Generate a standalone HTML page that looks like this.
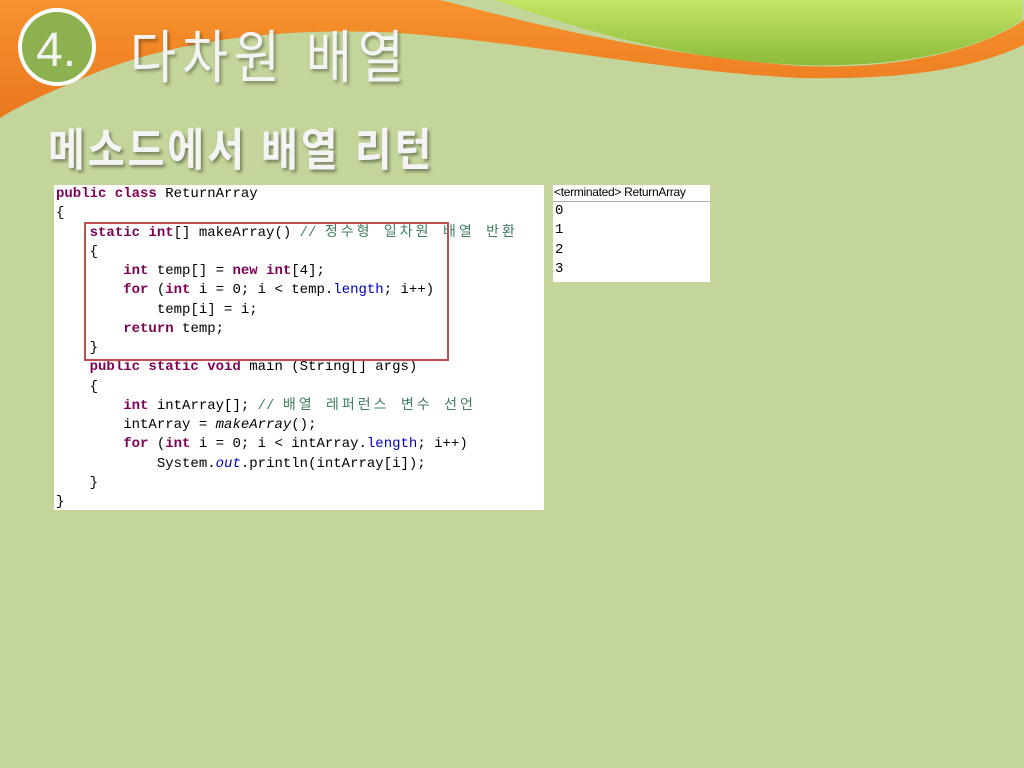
<!DOCTYPE html>
<html><head><meta charset="utf-8"><style>
body{margin:0;width:1024px;height:768px;background:#c3d59a;position:relative;overflow:hidden;font-family:"Liberation Sans","Noto Sans CJK KR",sans-serif}
.abs{position:absolute}
.code{left:54px;top:185px;width:490px;height:325px;background:#fff}
pre{margin:0;font-family:"Liberation Mono","Noto Sans CJK KR",monospace;font-size:14px;line-height:19.25px;color:#000;position:absolute;left:2px;top:0px}
.k{color:#7f0055;font-weight:bold}.c{color:#3f7f5f}.f{color:#0000c0}.i{font-style:italic}
.ko{letter-spacing:3px}
.box{left:84px;top:222px;width:361px;height:135px;border:2px solid #c0504d}
.con{left:553px;top:185px;width:157px;height:97px;background:#fff}
.con .h{font-size:12px;height:16px;line-height:15px;border-bottom:1px solid #aaa;padding-left:1px;letter-spacing:-0.3px}
.con pre{position:static;font-size:14px;line-height:19.3px;padding-left:2px}
.t1{left:130px;top:12px;font-size:50px;color:#f4f4f4;text-shadow:2px 2px 3px rgba(0,0,0,.35);letter-spacing:6px;transform:scaleY(1.15);transform-origin:0 0}
.t2{left:48px;top:114px;font-size:40px;font-weight:bold;color:#f4f4f4;text-shadow:2px 2px 3px rgba(0,0,0,.4);letter-spacing:3px;transform:scaleY(1.12);transform-origin:0 0}
</style></head><body>
<svg class="abs" style="left:0;top:0" width="1024" height="130">
<defs><linearGradient id="o" x1="0" y1="0" x2="0" y2="1"><stop offset="0" stop-color="#f7922e"/><stop offset="1" stop-color="#e9781e"/></linearGradient>
<linearGradient id="g" x1="0" y1="0" x2="0" y2="1"><stop offset="0" stop-color="#c4e466"/><stop offset="1" stop-color="#8cbb3a"/></linearGradient></defs>
<path d="M0 0 H440 C520 20 650 55 800 66 C900 70 980 50 1024 20 V45 C970 70 900 80 800 78 C650 70 550 45 400 33 C250 25 150 50 90 75 C50 92 20 105 0 118 Z" fill="url(#o)"/>
<path d="M495 0 C580 30 680 60 800 65 C900 68 980 50 1022 20 V0 Z" fill="url(#g)"/>
<circle cx="57" cy="47" r="37" fill="#8db150" stroke="#fff" stroke-width="4"/>
<text x="36" y="66" font-family="Liberation Sans" font-size="48" fill="#f4f4f4">4.</text>
</svg>
<div class="abs t1">다차원 배열</div>
<div class="abs t2">메소드에서 배열 리턴</div>
<div class="abs code"><pre><span class="k">public class</span> ReturnArray
{
    <span class="k">static int</span>[] makeArray() <span class="c">// <span class="ko">정수형 일차원 배열 반환</span></span>
    {
        <span class="k">int</span> temp[] = <span class="k">new int</span>[4];
        <span class="k">for</span> (<span class="k">int</span> i = 0; i &lt; temp.<span class="f">length</span>; i++)
            temp[i] = i;
        <span class="k">return</span> temp;
    }
    <span class="k">public static void</span> main (String[] args)
    {
        <span class="k">int</span> intArray[]; <span class="c">// <span class="ko">배열 레퍼런스 변수 선언</span></span>
        intArray = <span class="i">makeArray</span>();
        <span class="k">for</span> (<span class="k">int</span> i = 0; i &lt; intArray.<span class="f">length</span>; i++)
            System.<span class="f i">out</span>.println(intArray[i]);
    }
}</pre></div>
<div class="abs box"></div>
<div class="abs con"><div class="h">&lt;terminated&gt; ReturnArray</div><pre>0
1
2
3</pre></div>
</body></html>
